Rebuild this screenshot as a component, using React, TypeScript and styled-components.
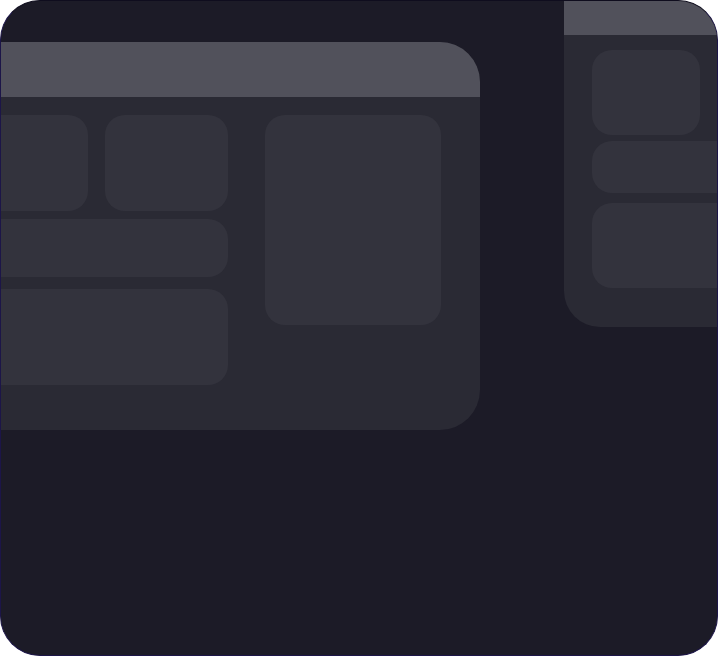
import React from 'react';
import styled, { createGlobalStyle } from 'styled-components';

const palette = {
  page: '#ffffff',
  frame: '#1c1b27',
  frameBorder: '#1c1548',
  frameBorderTop: '#0f0d1e',
  card: '#2a2a34',
  header: '#51515b',
  tile: '#33333d',
};

const GlobalStyle = createGlobalStyle`
  * {
    box-sizing: border-box;
  }
  html, body {
    margin: 0;
    padding: 0;
    background: ${palette.page};
    font-family: 'Inter', 'Liberation Sans', sans-serif;
  }
`;

const Frame = styled.div`
  display: flex;
  align-items: flex-start;
  width: 718px;
  height: 656px;
  border: 1px solid ${palette.frameBorder};
  border-top-color: ${palette.frameBorderTop};
  border-radius: 40px;
  background: ${palette.frame};
  overflow: hidden;
`;

const Window = styled.div<{ $width: number; $left: number; $top: number; $radius: number }>`
  flex-shrink: 0;
  display: flex;
  flex-direction: column;
  width: ${({ $width }) => $width}px;
  margin-left: ${({ $left }) => $left}px;
  margin-top: ${({ $top }) => $top}px;
  border-radius: ${({ $radius }) => $radius}px;
  background: ${palette.card};
  overflow: hidden;
`;

const TitleBar = styled.div<{ $height: number }>`
  height: ${({ $height }) => $height}px;
  background: ${palette.header};
`;

const Body = styled.div<{ $pad: string }>`
  display: flex;
  padding: ${({ $pad }) => $pad};
  gap: 37px;
  align-items: flex-start;
`;

const Column = styled.div`
  display: flex;
  flex-direction: column;
`;

const Row = styled.div<{ $gap: number }>`
  display: flex;
  gap: ${({ $gap }) => $gap}px;
`;

const Tile = styled.div<{ $w?: number; $h: number; $mt?: number }>`
  flex-shrink: 0;
  width: ${({ $w }) => ($w ? `${$w}px` : '100%')};
  height: ${({ $h }) => $h}px;
  margin-top: ${({ $mt }) => $mt ?? 0}px;
  border-radius: 20px;
  background: ${palette.tile};
`;

const App: React.FC = () => {
  return (
    <>
      <GlobalStyle />
      <Frame>
        {/* main window, cut off on the left */}
        <Window $width={554} $left={-75} $top={41} $radius={40}>
          <TitleBar $height={55} />
          <Body $pad="18px 39px 45px 39px">
            <Column>
              <Row $gap={17}>
                <Tile $w={123} $h={96} />
                <Tile $w={123} $h={96} />
              </Row>
              <Tile $w={263} $h={58} $mt={8} />
              <Tile $w={263} $h={96} $mt={12} />
            </Column>
            <Tile $w={176} $h={210} />
          </Body>
        </Window>

        {/* second window, cut off at the top and right */}
        <Window $width={232} $left={84} $top={-36} $radius={36}>
          <TitleBar $height={70} />
          <Body $pad="15px 28px 39px 28px">
            <Column>
              <Row $gap={17}>
                <Tile $w={108} $h={85} />
                <Tile $w={51} $h={85} />
              </Row>
              <Tile $w={176} $h={52} $mt={6} />
              <Tile $w={176} $h={85} $mt={10} />
            </Column>
          </Body>
        </Window>
      </Frame>
    </>
  );
};

export default App;
